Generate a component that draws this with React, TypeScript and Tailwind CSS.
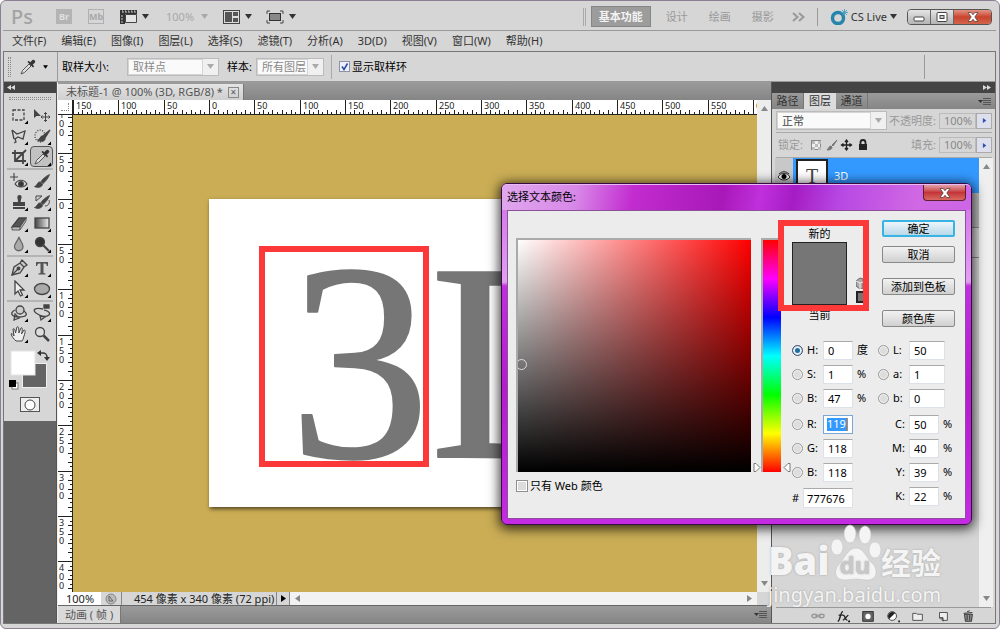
import type { ReactNode } from 'react';
import clsx from 'clsx';

const MENUS = ['文件(F)', '编辑(E)', '图像(I)', '图层(L)', '选择(S)', '滤镜(T)', '分析(A)', '3D(D)', '视图(V)', '窗口(W)', '帮助(H)'];

// pixels on the ruler for 50 document units
const UNIT = 45.33;

function Caret({ className = 'text-[#333]' }: { className?: string }) {
  return (
    <svg viewBox="0 0 7 5" className={clsx('h-[5px] w-[7px] shrink-0', className)}>
      <path d="M0 0h7L3.5 5z" fill="currentColor" />
    </svg>
  );
}

function WindowButtons() {
  return (
    <div className="flex h-4 overflow-hidden rounded border border-[#555]">
      <button aria-label="最小化" className="flex w-[23px] items-center justify-center border-r border-[#666] bg-linear-to-b from-[#e4e4e4] to-[#b4b4b4]">
        <svg viewBox="0 0 12 10" className="h-[10px] w-3"><rect x="1" y="5" width="10" height="4" rx="1" fill="#fff" stroke="#444" /></svg>
      </button>
      <button aria-label="还原" className="flex w-[23px] items-center justify-center border-r border-[#666] bg-linear-to-b from-[#e4e4e4] to-[#b4b4b4]">
        <svg viewBox="0 0 12 10" className="h-[10px] w-3"><rect x="1" y=".5" width="10" height="9" rx="1" fill="#fff" stroke="#444" /><rect x="4" y="3.5" width="4" height="3" fill="#ccc" stroke="#444" /></svg>
      </button>
      <button aria-label="关闭" className="flex w-[37px] items-center justify-center bg-linear-to-b from-[#e39384] via-[#c8432c] to-[#d4644c]">
        <CloseGlyph />
      </button>
    </div>
  );
}

function CloseGlyph() {
  return (
    <svg viewBox="0 0 12 10" className="h-[10px] w-3">
      <path d="M1 .5h3.2L6 2.7 7.800.5H11L7.800 5 11 9.500H7.800L6 7.300 4.200 9.500H1L4.200 5z" fill="#fff" stroke="#5a4040" strokeWidth=".8" />
    </svg>
  );
}

function AppBar() {
  return (
    <header className="flex h-7 items-center border-b border-[#999] pr-1 pl-2">
      <span className="w-[45px] text-xl leading-5 font-medium text-[#a3a3a3]">Ps</span>
      <button className="mr-4 h-[15px] w-4 bg-[#b4b4b4] text-[9px] leading-[15px] font-bold text-[#e0e0e0]">Br</button>
      <button className="mr-4 h-[15px] w-4 border border-[#b0b0b0] text-[9px] leading-[13px] font-bold text-[#a8a8a8]">Mb</button>
      <button aria-label="查看额外内容" className="flex items-center gap-[5px]">
        <svg viewBox="0 0 17 15" className="h-[15px] w-[17px]">
          <path d="M0 1h17v4H5v10H0z" fill="#333" />
          <path d="M2 2h1v2M5 2h1v2M8 2h1v2M11 2h1v2M14 2h1v2M1 7h2M1 10h2M1 13h2" stroke="#ccc" fill="none" />
          <path d="M5.500 5.500h11v8h-11z" fill="#e4e4e4" stroke="#444" />
        </svg>
        <Caret />
      </button>
      <button className="ml-[17px] flex items-center gap-[7px] text-[#a8a8a8]">100% <Caret className="text-[#a8a8a8]" /></button>
      <button aria-label="排列文档" className="ml-[15px] flex items-center gap-[5px]">
        <svg viewBox="0 0 17 14" className="h-[14px] w-[17px]">
          <rect x=".5" y=".5" width="16" height="13" fill="#ddd" stroke="#444" />
          <path d="M2 2h7v10H2zM10 2h5v4h-5zM10 8h5v4h-5z" fill="#555" />
        </svg>
        <Caret />
      </button>
      <button aria-label="屏幕模式" className="ml-[14px] flex items-center gap-[5px]">
        <svg viewBox="0 0 18 14" className="h-[14px] w-[18px]">
          <rect x="3.500" y="3.500" width="11" height="7" fill="#888" stroke="#333" />
          <path d="M1 4V1h3M14 1h3v3M17 10v3h-3M4 13H1v-3" fill="none" stroke="#444" />
        </svg>
        <Caret />
      </button>

      <div className="ml-auto flex items-center">
        <span className="mr-[5px] h-[18px] w-[3px] border-x border-[#aaa]" />
        <button className="h-[21px] w-[60px] border border-[#858585] bg-[#9c9c9c] font-bold text-[#f4f4f4]">基本功能</button>
        <button className="ml-[15px] text-[#999]">设计</button>
        <button className="ml-[21px] text-[#999]">绘画</button>
        <button className="ml-[21px] text-[#999]">摄影</button>
        <button aria-label="更多" className="ml-[18px]">
          <svg viewBox="0 0 13 10" className="h-[10px] w-[13px]"><path d="M1 1l4.500 4L1 9M7 1l4.500 4L7 9" fill="none" stroke="#999" strokeWidth="2" /></svg>
        </button>
        <span className="mx-3 h-[18px] w-px bg-[#999]" />
        <button className="mr-[10px] flex items-center gap-[3px] text-[#333]">
          <svg viewBox="0 0 18 16" className="h-4 w-[18px]">
            <circle cx="8" cy="9" r="5.500" fill="none" stroke="#2585ab" strokeWidth="3.500" />
            <path d="M14.500 0v7M11 3.500h7M12 1l5 5M17 1l-5 5" stroke="#4b9fc0" strokeWidth=".9" />
          </svg>
          CS Live <Caret />
        </button>
        <WindowButtons />
      </div>
    </header>
  );
}

function Dropdown({ label, value, className, dim }: { label: string; value: string; className: string; dim?: boolean }) {
  return (
    <span className={clsx('flex items-center border border-[#bbb] bg-[#f0f0f0] pr-1', className)}>
      <select aria-label={label} className={clsx('h-full min-w-0 flex-1 appearance-none overflow-hidden border border-[#d4d4d4] bg-[#fafafa] pl-1 leading-3', dim ? 'text-[#888]' : 'text-[#444]')}>
        <option>{value}</option>
      </select>
      <Caret className="ml-1 text-[#aaa]" />
    </span>
  );
}

function OptionsBar() {
  return (
    <div className="flex h-[30px] items-center border-b border-[#999] pl-1 text-black">
      <span className="h-5 w-[3px] border-x border-dotted border-[#888]" />
      <button aria-label="吸管工具" className="ml-2 flex w-[38px] items-center justify-between pr-[9px]">
        <ToolSvg><Eyedropper /></ToolSvg>
        <svg viewBox="0 0 7 5" className="h-1 w-[5px]"><path d="M0 0h7L3.500 5z" /></svg>
      </button>
      <span className="mr-1 h-[29px] w-px bg-[#999]" />
      <span className="w-[65px]">取样大小:</span>
      <Dropdown label="取样大小" value="取样点" dim className="h-[18px] w-[92px]" />
      <span className="ml-2 w-[29px]">样本:</span>
      <Dropdown label="样本" value="所有图层" dim className="h-[18px] w-[68px]" />
      <span className="mx-[7px] h-6 w-px bg-[#aaa]" />
      <label className="flex items-center gap-[2px]">
        <input type="checkbox" defaultChecked className="peer sr-only" />
        <svg viewBox="0 0 11 11" className="h-[11px] w-[11px]">
          <rect x=".5" y=".5" width="10" height="10" fill="#eef" stroke="#8a94a4" />
          <path d="M3 5.500l2 3L8.500 2.500" fill="none" stroke="#2b4a9c" strokeWidth="1.500" />
        </svg>
        显示取样环
      </label>
      <span className="mr-[70px] ml-auto h-6 w-px bg-[#999]" />
    </div>
  );
}

function ToolSvg({ children }: { children: ReactNode }) {
  return (
    <svg viewBox="0 0 18 18" className="h-[18px] w-[18px] shrink-0" fill="none" stroke="#444" strokeWidth="1.300">
      {children}
    </svg>
  );
}

function Eyedropper() {
  return (
    <>
      <path d="M2 16l1.500-3.500L10 6l2 2-6.500 6.500z" fill="#ddd" stroke="#555" strokeWidth="1" />
      <path d="M8.500 4l5.500 5.500 1.200-1.200-1.500-1.500L16 4.500C17 3 15 1 13.500 2L11.200 4.300 9.700 2.800z" fill="#333" stroke="none" />
    </>
  );
}

const brush = <path d="M16.500 2.500C13 4 9.500 7 8 9.500L10 11.500C12.500 9.500 15.500 6 16.500 2.500zM7.500 10C4 9.500 5 13 1.500 14.500 5 16.500 9.500 15 9.500 12z" fill="#444" stroke="#444" strokeWidth=".8" />;

const TOOLS: { name: string; art: ReactNode; flyout?: boolean; active?: boolean }[][] = [
  [
    { name: '矩形选框', flyout: true, art: <rect x="3" y="4" width="11" height="10" strokeDasharray="3 1.500" /> },
    { name: '移动', art: <><path d="M1 3v9l2.500-2H8z" fill="#444" stroke="none" /><path d="M12.500 6.500v9M8 11h9M11 8l1.500-1.500L14 8M11 14l1.500 1.500L14 14M9.500 9.500L8 11l1.500 1.500M15.500 9.500L17 11l-1.500 1.500" strokeWidth="1" /></> },
    { name: '多边形套索', flyout: true, art: <path d="M2 3l5 4 8-3-2 8-5-2-3 2 1 3-2 1M2 3l2 9" /> },
    { name: '快速选择', flyout: true, art: <><ellipse cx="7" cy="9" rx="5" ry="6" strokeDasharray="1 1.500" /><path d="M17 3l-6 5 1.500 2zM10 9c-3 0-2 3-5 4 3 2 7 1 7-2z" fill="#444" /></> },
    { name: '裁剪', flyout: true, art: <path d="M5 2v11h11M2 5h11v11M5 13L16 2" strokeWidth="1.800" /> },
    { name: '吸管', flyout: true, active: true, art: <Eyedropper /> },
  ],
  [
    { name: '修复', flyout: true, art: <><path d="M4 1v8M0 5h8M5 12c3-5 9-5 12 0-3 4-9 4-12 0z" strokeWidth="1.100" /><circle cx="11" cy="12" r="2.300" fill="#333" /></> },
    { name: '画笔', flyout: true, art: brush },
    { name: '图章', flyout: true, art: <path d="M7.500 3a2.500 2.500 0 0 1 4 0c.5 2-.8 3-.8 6H15v4H3V9h5c0-3-1-4-.5-6zM3 14h12v2H3z" fill="#444" stroke="none" /> },
    { name: '历史画笔', flyout: true, art: <>{brush}<path d="M3 3h6L3 8zM12 13c4 0 5-4 4-6" strokeWidth="1" /></> },
    { name: '橡皮擦', flyout: true, art: <><path d="M2 13l7-9h7l-6 9z" fill="#555" /><path d="M2 13h8v3H2zM10 13l6-9v3l-6 9" fill="#bbb" strokeWidth=".8" /></> },
    {
      name: '渐变',
      flyout: true,
      art: (
        <>
          <defs><linearGradient id="toolGradient"><stop stopColor="#444" /><stop offset="1" stopColor="#eee" /></linearGradient></defs>
          <rect x="2" y="4" width="14" height="10" fill="url(#toolGradient)" />
        </>
      ),
    },
    { name: '模糊', flyout: true, art: <path d="M9 2c1 4 4 6 4 9.500a4.200 4.200 0 0 1-8.500 0C4.500 8 8 6 9 2z" fill="#aaa" stroke="#666" /> },
    { name: '加深', flyout: true, art: <><circle cx="7" cy="7" r="4.500" fill="#333" /><path d="M10 10l6 6" strokeWidth="2.200" /></> },
  ],
  [
    { name: '钢笔', flyout: true, art: <><path d="M2 16l2-8 6-4 4 4-4 6zM10 4l2-3 5 5-3 2" fill="#ccc" /><path d="M2 16l6-6" /><circle cx="8.500" cy="9.500" r="1.300" fill="#444" /></> },
    { name: '文字', flyout: true, art: <path d="M3 3h12v4h-1c-.5-2-1-2.500-3.500-2.500V14l2 .5v1h-7v-1l2-.5V4.500C5 4.500 4.500 5 4 7H3z" fill="#555" stroke="none" /> },
    { name: '路径选择', flyout: true, art: <path d="M5 1v13l3-3 2.500 5 2-1L10 10h4z" fill="#eee" /> },
    { name: '椭圆', flyout: true, art: <ellipse cx="9" cy="9" rx="7.500" ry="5.500" fill="#aaa" /> },
  ],
  [
    { name: '3D 旋转', flyout: true, art: <><circle cx="10" cy="6" r="4" fill="#ccc" /><path d="M5 6C-1 9 2 13 9 13c8 0 9-3 5-6M5 10l4 4-5 2z" /></> },
    { name: '3D 环绕', flyout: true, art: <><path d="M10 5C2 3-1 6 3 9c3 2 9 5 13 2 2-3-2-4-5-5M7 12l5 1-4 3z" /><path d="M11 1h5v3h-5z" fill="#444" /></> },
    { name: '抓手', flyout: true, art: <path d="M6 16C4 14 2 12 1 9c1-1 2 0 3 2L3 4c1-1 2 0 2.500 4L7 2c1-1 2 0 1.800 6L11 3c1-1 2 0 .5 6L14 5c1 0 2 .5 0 6-1 3-1 4-2 5z" fill="#eee" strokeWidth="1" /> },
    { name: '缩放', art: <><circle cx="7" cy="7" r="4.500" fill="#ddd" /><path d="M10.500 10.500L16 16" strokeWidth="2.500" /></> },
  ],
];

function Toolbox() {
  return (
    <aside className="flex w-[53px] flex-col border-r border-[#555] bg-[#646464]">
      <div className="flex h-[11px] items-center bg-[#444] pl-[3px]">
        <svg viewBox="0 0 8 5" className="h-[5px] w-2"><path d="M4 0v5L0 2.500zM8 0v5L4 2.500z" fill="#ddd" /></svg>
      </div>
      <div className="bg-[#d6d6d6] px-[3px] pb-[9px]">
        <div className="mx-[2px] mt-1 mb-1 h-[3px] border-y border-dotted border-[#888]" />
        {TOOLS.map((group, i) => (
          <div key={i} className={clsx('grid grid-cols-2', i > 0 && 'mt-px border-t-2 border-[#b4b4b4]')}>
            {group.map((tool) => (
              <button
                key={tool.name}
                aria-label={tool.name}
                className={clsx('flex h-[21px] items-center justify-center border', tool.active ? 'rounded-sm border-[#555] bg-[#c2c2c2]' : 'border-transparent')}
              >
                <ToolSvg>
                  {tool.art}
                  {tool.flyout && <path d="M18 14.500v3.500h-3.500z" fill="#000" stroke="none" />}
                </ToolSvg>
              </button>
            ))}
          </div>
        ))}
        <svg viewBox="0 0 46 44" className="mt-[5px] h-11 w-full">
          <rect x="15.500" y="14.500" width="24" height="24" fill="#646464" stroke="#eee" />
          <rect x="4" y="2" width="24" height="24" fill="#fff" stroke="#e4e4e4" />
          <path d="M33 4h3a4 4 0 0 1 4 4v2" fill="none" stroke="#333" strokeWidth="1.500" />
          <path d="M34 1v6l-4-3zM37 8h6l-3 4z" fill="#333" />
          <rect x="5" y="34" width="6" height="6" fill="#fff" stroke="#777" />
          <rect x="2" y="31" width="7" height="7" fill="#000" />
        </svg>
        <button aria-label="快速蒙版" className="mx-auto mt-1 flex h-[15px] w-5 items-center justify-center border border-[#555] bg-[#eee]">
          <svg viewBox="0 0 12 12" className="h-3 w-3"><circle cx="6" cy="6" r="5" fill="#fff" stroke="#444" /></svg>
        </button>
      </div>
    </aside>
  );
}

function TopRuler() {
  const ticks = Array.from({ length: 152 }, (_, i) => i);
  return (
    <svg className="h-[15px] min-w-0 flex-1 bg-white" fill="#222" shapeRendering="crispEdges">
      {ticks.map((i) => (
        <rect key={i} x={Math.round((i * UNIT) / 10)} y={i % 10 === 0 ? 0 : i % 2 ? 12 : 10} width="1" height="15" />
      ))}
      {ticks.filter((i) => i % 10 === 0).map((i) => (
        <text key={i} x={Math.round((i * UNIT) / 10) + 3} y="9" fontSize="9">{Math.abs(i * 5 - 150)}</text>
      ))}
      <rect y="14" width="100%" height="1" />
    </svg>
  );
}

function SideRuler() {
  const ticks = Array.from({ length: 108 }, (_, i) => i);
  return (
    <svg className="h-full w-[15px] shrink-0 bg-white" fill="#222" shapeRendering="crispEdges">
      {ticks.map((i) => (
        <rect key={i} x={i % 10 === 0 ? 0 : i % 2 ? 12 : 10} y={Math.round((i * UNIT) / 10) - 7} width="15" height="1" />
      ))}
      {ticks.filter((i) => i % 10 === 0).map((i) => (
        <text key={i} fontSize="9">
          {String(Math.abs(i * 5 - 100)).split('').map((digit, n) => (
            <tspan key={n} x="1" y={Math.round((i * UNIT) / 10) + 3 + n * 9}>{digit}</tspan>
          ))}
        </text>
      ))}
      <rect x="14" width="1" height="100%" />
    </svg>
  );
}

function ScrollArrow({ dir }: { dir: 'up' | 'down' | 'left' | 'right' }) {
  const turn = { up: 'rotate-180', down: '', left: 'rotate-90', right: '-rotate-90' }[dir];
  return <Caret className={clsx('text-[#888]', turn)} />;
}

function DocumentWindow() {
  return (
    <main className="flex min-w-0 flex-1 flex-col border-l border-[#eee]">
      <div className="flex h-[18px] items-end bg-linear-to-b from-[#9b9b9b] to-[#858585]">
        <div className="flex h-4 items-center gap-[5px] border-r border-[#777] bg-linear-to-b from-[#e4e4e4] to-[#cfcfcf] pr-1 pl-2 text-[11px] text-[#555]">
          未标题-1 @ 100% (3D, RGB/8) *
          <button aria-label="关闭文档" className="h-[11px] w-[11px] border border-[#888] text-[10px] leading-[9px]">×</button>
        </div>
      </div>
      <div className="flex min-h-0 flex-1">
        <div className="flex min-w-0 flex-1 flex-col">
          <div className="flex">
            <div className="h-[15px] w-[15px] shrink-0 border-r border-b border-[#222] bg-white p-[3px]"><div className="h-full border-r border-b border-dotted border-[#888]" /></div>
            <TopRuler />
          </div>
          <div className="flex min-h-0 flex-1">
            <SideRuler />
            <div className="relative min-w-0 flex-1 overflow-hidden bg-[#caad55]">
              <div className="absolute top-[84px] left-[136px] h-[308px] w-[412px] bg-white shadow-[1px_2px_4px_rgba(0,0,0,0.6)]">
                <svg className="h-full w-full font-['Liberation_Serif',serif]">
                  <text x="80" y="258" fontSize="282" fill="#777676" stroke="#777676" strokeWidth="2" strokeLinejoin="round">3D</text>
                </svg>
              </div>
              <div className="absolute top-[131px] left-[186px] h-[221px] w-[170px] border-6 border-[#fc3838]" />
            </div>
          </div>
        </div>
        <div className="flex w-[14px] flex-col items-center justify-between bg-[#ededed] py-[6px]">
          <ScrollArrow dir="up" />
          <ScrollArrow dir="down" />
        </div>
      </div>
      <div className="flex h-[14px] items-center border-b border-[#666] bg-[#d6d6d6] text-[#222]">
        <input aria-label="缩放" defaultValue="100%" className="h-[13px] w-[43px] bg-white pl-2 outline-none" />
        <svg viewBox="0 0 12 12" className="mx-1 h-3 w-3"><circle cx="6" cy="6" r="5" fill="#bbb" stroke="#888" /><path d="M4 3v5h4M4 3l4 5" stroke="#666" fill="none" /></svg>
        <span className="flex h-full w-[156px] items-center border-x border-[#888] pl-3 whitespace-nowrap">454 像素 x 340 像素 (72 ppi)</span>
        <button aria-label="状态菜单" className="flex h-full w-[13px] items-center justify-center border-r border-[#888]"><Caret className="-rotate-90 text-black" /></button>
        <div className="flex h-full flex-1 items-center justify-between bg-[#f2f2f2] px-1"><ScrollArrow dir="left" /><ScrollArrow dir="right" /></div>
        <div className="h-full w-[14px]" />
      </div>
      <div className="flex h-[17px] items-center justify-between bg-linear-to-b from-[#9b9b9b] to-[#858585] pr-1">
        <button className="h-full border-r border-[#777] bg-[#d9d9d9] px-[7px] text-[#555]">动画 ( 帧 )</button>
        <PanelMenu />
      </div>
    </main>
  );
}

function PanelMenu() {
  return (
    <svg viewBox="0 0 13 9" className="h-[9px] w-[13px]"><path d="M0 3h5L2.500 6z" fill="#333" /><path d="M5 1.500h8M5 3.500h8M5 5.500h8M5 7.500h8" stroke="#555" /></svg>
  );
}

function PercentField({ label }: { label: string }) {
  return (
    <label className="ml-auto flex items-center text-[#999]">
      {label}
      <input defaultValue="100%" className="ml-[3px] h-4 w-[37px] border border-[#bbb] bg-[#d6d6d6] pl-1 text-[#888] outline-none" />
      <span className="flex h-4 w-4 items-center justify-center border border-[#aaa] bg-[#dde0ec]">
        <Caret className="-rotate-90 scale-75 text-[#3350b0]" />
      </span>
    </label>
  );
}

const FOOTER_ICONS: { name: string; art: ReactNode }[] = [
  { name: '链接图层', art: <path d="M1 8a3 2 0 1 0 6 0 3 2 0 1 0-6 0M9 8a3 2 0 1 0 6 0 3 2 0 1 0-6 0M5 8h6" stroke="#999" strokeWidth="1.500" fill="none" /> },
  { name: '图层样式', art: <><path d="M2 14c3 0 2.500-11 6-11M3 7h5M8 7c3 0 2 6 5 6M14 7l-6 6" fill="none" stroke="#222" strokeWidth="1.600" /><path d="M14 13h2v2h-2z" /></> },
  { name: '图层蒙版', art: <><rect x="2" y="3" width="12" height="11" fill="#666" stroke="#222" /><circle cx="8" cy="8.500" r="3" fill="#fff" /></> },
  { name: '调整图层', art: <><circle cx="7" cy="8" r="5" fill="#fff" stroke="#333" /><path d="M3.500 11.500a5 5 0 0 1 7-7zM14 13h2v2h-2z" fill="#222" /></> },
  { name: '新建组', art: <path d="M2 5h4l1 1h6v7H2z" fill="#eee" stroke="#444" /> },
  { name: '新建图层', art: <><path d="M4 4h9v9H7L4 10z" fill="#eee" stroke="#444" /><path d="M4 10h4v4" fill="#999" stroke="#222" /></> },
  { name: '删除图层', art: <><path d="M4 6h9l-1 8H5z" fill="#999" stroke="#222" /><path d="M3 5l10-1M7 3l3-1M7 7v6M10 7v6" stroke="#222" /></> },
];

function LayersPanel() {
  return (
    <aside className="flex w-[224px] flex-col border-l border-[#555] bg-[#d6d6d6]">
      <div className="flex h-[11px] items-center justify-end bg-[#444] pr-1">
        <svg viewBox="0 0 8 5" className="h-[5px] w-2"><path d="M0 0v5l4-2.500zM4 0v5l4-2.500z" fill="#ddd" /></svg>
      </div>
      <div className="flex h-4 items-center bg-linear-to-b from-[#9b9b9b] to-[#858585] pr-1 text-[#333]">
        <button className="h-full w-8 border-r border-[#777]">路径</button>
        <button className="h-full w-8 bg-[#dcdcdc]">图层</button>
        <button className="mr-auto h-full w-8 border-r border-[#777]">通道</button>
        <PanelMenu />
      </div>
      <div className="mr-[3px] ml-1 flex h-6 items-center border-b border-[#aaa]">
        <Dropdown label="混合模式" value="正常" className="h-[19px] w-[111px]" />
        <PercentField label="不透明度:" />
      </div>
      <div className="mr-[3px] ml-1 flex h-[25px] items-center border-b border-[#aaa] text-[#999]">
        <span className="mr-[6px] ml-[2px]">锁定:</span>
        <svg viewBox="0 0 64 16" className="h-4 w-16">
          <rect x="2.500" y="3.500" width="9" height="9" fill="#eee" stroke="#888" /><path d="M3 4h3v3H3zM9 4h3v3H9zM6 7h3v3H6zM3 10h3v3H3zM9 10h3v3H9z" fill="#bbb" />
          <path d="M28 3l-5 5 1 1zM22 9c-2 0-2 2-4 4 4 0 5-1 5-3z" fill="#777" stroke="#777" />
          <path d="M37.500 3v10M32.500 8h10M36 5l1.500-2L39 5M36 11l1.500 2 1.500-2M34.500 6.500L32.500 8l2 1.500M40.500 6.500l2 1.500-2 1.500" fill="none" stroke="#222" strokeWidth="1.300" />
          <path d="M50 7h8v6h-8z" fill="#222" /><path d="M51.500 8V5.500a2.500 2.500 0 0 1 5 0V8" fill="none" stroke="#222" strokeWidth="1.800" />
        </svg>
        <PercentField label="填充:" />
      </div>
      <div className="mr-[2px] ml-[3px] flex min-h-0 flex-1">
        <div className="min-w-0 flex-1">
          <div className="flex h-[35px] items-center bg-[#3399ff] text-white">
            <button aria-label="切换可见性" className="flex h-full w-[18px] items-center justify-center bg-[#c8c8c8]">
              <svg viewBox="0 0 12 12" className="h-3 w-3"><path d="M0 7c3-5 9-5 12 0-3 4-9 4-12 0z" fill="#eee" stroke="#222" /><circle cx="6" cy="6.500" r="2.500" /><path d="M1 4c3-3 7-3 10 0" stroke="#222" fill="none" /></svg>
            </button>
            <span className="ml-[3px] flex h-[33px] w-8 items-center justify-center border-2 border-[#222] bg-white font-['Liberation_Serif',serif] text-xl text-[#444]">T</span>
            <span className="ml-[6px]">3D</span>
          </div>
          <div className="h-[35px] border-b border-[#888] bg-[#bcbcbc]" />
          <div className="h-[30px] border-b border-[#888] bg-[#d6d6d6]" />
        </div>
        <div className="flex w-[14px] flex-col items-center justify-between bg-[#efefef] py-[6px]">
          <ScrollArrow dir="up" />
          <ScrollArrow dir="down" />
        </div>
      </div>
      <div className="mx-1 flex h-4 items-center justify-end gap-[9px] border-t border-[#999] pr-[15px]">
        {FOOTER_ICONS.map((icon) => (
          <button key={icon.name} aria-label={icon.name}>
            <svg viewBox="0 0 16 16" className="h-[14px] w-4">{icon.art}</svg>
          </button>
        ))}
      </div>
    </aside>
  );
}

interface FieldProps {
  label: string;
  value: string;
  unit?: string;
  radio?: boolean;
  checked?: boolean;
  wide?: boolean;
  selected?: boolean;
}

function ColorValue({ label, value, unit, radio, checked, wide, selected }: FieldProps) {
  return (
    <div className="flex h-5 items-center">
      {radio ? (
        <input
          type="radio"
          name="channel"
          aria-label={label}
          defaultChecked={checked}
          className="mr-1 h-[11px] w-[11px] appearance-none rounded-full border border-[#999] bg-[#ddd] shadow-[inset_0_0_0_1px_#f4f4f4] checked:border-[#557] checked:bg-[#1d6fa0] checked:shadow-[inset_0_0_0_2px_#e8f0f6]"
        />
      ) : null}
      <span className={clsx('shrink-0', radio ? 'w-4' : 'w-[31px] pr-1 text-right')}>{label}:</span>
      {selected ? (
        <span className="flex h-[19px] w-[30px] items-center border border-[#7aa7d6] bg-white pl-[3px]">
          <input aria-label={label} defaultValue={value} className="h-[13px] w-[21px] border-r border-[#e08020] bg-[#3399ff] text-white outline-none" />
        </span>
      ) : (
        <input aria-label={label} defaultValue={value} className={clsx('h-[19px] border border-[#dde1ea] border-t-[#aaa] bg-white pl-1 outline-none', wide ? 'w-9' : 'w-[30px]')} />
      )}
      {unit && <span className="ml-1">{unit}</span>}
    </div>
  );
}

function DialogButton({ children, primary }: { children: ReactNode; primary?: boolean }) {
  return (
    <button
      className={clsx(
        'h-[17px] rounded-xs bg-linear-to-b',
        primary ? 'border-2 border-[#38b4e4] from-[#eef6fa] to-[#b8d8e8] leading-[13px]' : 'border border-[#888] from-[#f2f2f2] to-[#d0d0d0] leading-[15px]',
      )}
    >
      {children}
    </button>
  );
}

function ColorPicker() {
  return (
    <section
      role="dialog"
      aria-label="选择文本颜色"
      className="absolute top-[182px] left-[500px] w-[471px] rounded-md border border-[#3a0a44] bg-[linear-gradient(to_bottom,#d070e8_0,#e0a0f0_98px,#c030e0_102px,#b41ccc_60%,#c42ce4)] px-[5px] pb-[5px] text-black shadow-[0_2px_12px_2px_rgba(0,0,0,0.75)]"
    >
      <div className="-mx-[5px] flex h-[26px] items-start justify-between rounded-t-[5px] border-t border-[#eab8f4] bg-[linear-gradient(100deg,#e0a8ee_0,#d888e8_16%,#c22cd0_28%,#a818b8_47%,#c030dc_55%,#a51cc4_62%,#b848e4_72%,#d068e4_88%,#cc66e4)] px-[5px]">
        <h2 className="leading-6">选择文本颜色:</h2>
        <button aria-label="关闭" className="flex h-4 w-[43px] items-center justify-center rounded-b border border-t-0 border-[#5c2030] bg-linear-to-b from-[#e0a0a8] via-[#c43438] to-[#d86860]">
          <CloseGlyph />
        </button>
      </div>
      <div className="flex h-[309px] border border-[#8a5098] bg-[#ececec]">
        <div className="ml-2 pt-[27px]">
          <div className="flex">
            <div className="relative h-[234px] w-[235px] overflow-hidden border-t-2 border-l-2 border-[#aaa] bg-[linear-gradient(to_top,#000,transparent),linear-gradient(to_right,#fff,#f00)]">
              <span className="absolute top-[119px] -left-[2px] h-[11px] w-[11px] rounded-full border border-[#ddd]" />
            </div>
            <div className="ml-[2px] flex items-end">
              <svg viewBox="0 0 8 9" className="h-[9px] w-2"><path d="M1 .5h2l4 4-4 4H1z" fill="#fff" stroke="#777" /></svg>
              <div className="h-[234px] w-5 border-t-2 border-l-2 border-[#aaa] bg-[linear-gradient(to_bottom,#f00,#f0f,#00f,#0ff,#0f0,#ff0,#f00)]" />
              <svg viewBox="0 0 8 9" className="ml-[2px] h-[9px] w-2"><path d="M7 .5H5l-4 4 4 4h2z" fill="#fff" stroke="#777" /></svg>
            </div>
          </div>
          <label className="mt-[6px] flex items-center gap-[2px]">
            <input type="checkbox" className="h-3 w-3 appearance-none border border-[#8e8f8f] bg-[#dcdcdc] shadow-[inset_0_0_0_1px_#fff]" />
            <span>只有 Web 颜色</span>
          </label>
        </div>
        <div className="ml-px pt-[9px]">
          <div className="flex h-[120px]">
            <div className="relative flex w-[90px] flex-col">
              <span className="w-[55px] pt-[6px] text-center leading-4">新的</span>
              <div className="h-[63px] w-[55px] border border-[#222] bg-[#777676]" />
              <span className="w-[55px] pt-[2px] text-center leading-4">当前</span>
              <div className="absolute top-0 -left-[14px] flex h-[91px] w-[91px] flex-col items-end justify-end border-6 border-[#fc3838] pb-[2px]">
                <svg viewBox="0 0 7 12" className="mb-[2px] h-3 w-[7px]"><path d="M0 4l4-3 3 1v10H4L0 9z" fill="#aaa" stroke="#666" /><path d="M0 4l4 2v6M4 6l3-1" stroke="#eee" fill="none" /></svg>
                <span className="h-3 w-[7px] border-2 border-r-0 border-[#222] bg-[#777676]" />
              </div>
            </div>
            <div className="flex w-[73px] flex-col gap-[15px]">
              <div className="flex flex-col gap-[9px]">
                <DialogButton primary>确定</DialogButton>
                <DialogButton>取消</DialogButton>
              </div>
              <DialogButton>添加到色板</DialogButton>
              <DialogButton>颜色库</DialogButton>
            </div>
          </div>
          <div className="flex">
            <div className="flex w-[86px] flex-col gap-[6px]">
              <div className="flex flex-col gap-1">
                <ColorValue label="H" value="0" unit="度" radio checked />
                <ColorValue label="S" value="1" unit="%" radio />
                <ColorValue label="B" value="47" unit="%" radio />
              </div>
              <div className="flex flex-col gap-1">
                <ColorValue label="R" value="119" radio selected />
                <ColorValue label="G" value="118" radio />
                <ColorValue label="B" value="118" radio />
              </div>
              <label className="flex h-5 items-center gap-1">
                #
                <input defaultValue="777676" className="h-5 w-[50px] border border-[#dde1ea] border-t-[#aaa] bg-white pl-[3px] outline-none" />
              </label>
            </div>
            <div className="flex flex-col gap-[6px]">
              <div className="flex flex-col gap-1">
                <ColorValue label="L" value="50" radio wide />
                <ColorValue label="a" value="1" radio wide />
                <ColorValue label="b" value="0" radio wide />
              </div>
              <div className="flex flex-col gap-1">
                <ColorValue label="C" value="50" unit="%" />
                <ColorValue label="M" value="40" unit="%" />
                <ColorValue label="Y" value="39" unit="%" />
                <ColorValue label="K" value="22" unit="%" />
              </div>
            </div>
          </div>
        </div>
      </div>
    </section>
  );
}

function Watermark() {
  return (
    <div className="pointer-events-none absolute top-[522px] left-[767px] font-['Noto_Sans','Noto_Sans_CJK_SC',sans-serif] text-[#f4f4f4] [text-shadow:0_0_2px_rgba(120,120,120,0.6)]">
      <div className="flex h-[58px] items-end">
        <span className="w-[63px] text-[38px] leading-[42px] font-black">Bai</span>
        <div className="relative flex h-14 w-12 items-end justify-center">
          <svg viewBox="0 0 48 56" className="absolute inset-0 h-full w-full overflow-visible" fill="#f4f4f4" stroke="#c4c4c4" strokeWidth=".6">
            <ellipse cx="6" cy="22" rx="6" ry="8" />
            <ellipse cx="19" cy="9" rx="6" ry="9" />
            <ellipse cx="34" cy="10" rx="6" ry="9" />
            <ellipse cx="44" cy="25" rx="6" ry="8" />
            <path d="M25 23c8 0 10 10 17 16 6 7 3 16-5 16-6 0-8-1-12-1s-7 1-12 1c-9 0-11-9-5-16 6-6 9-16 17-16z" />
          </svg>
          <span className="relative text-2xl leading-8 font-bold text-[#c8c8c8]">du</span>
        </div>
        <span className="ml-[2px] text-[30px] leading-9 font-bold">经验</span>
      </div>
      <div className="text-xl leading-7">jingyan.baidu.com</div>
    </div>
  );
}

export default function App() {
  return (
    <div className="relative flex h-screen min-h-[600px] flex-col overflow-hidden rounded-md border border-[#8c7f93] bg-[#d6d6d6] pt-[2px] pr-[3px] pb-1 pl-[2px] font-['Noto_Sans','Noto_Sans_CJK_SC',sans-serif] text-[11px] leading-4 text-[#333]">
      <AppBar />
      <nav className="flex h-5 items-center gap-[15px] pl-[9px]">
        {MENUS.map((menu) => (
          <button key={menu} className="whitespace-nowrap">{menu}</button>
        ))}
      </nav>
      <div className="flex min-h-0 flex-1 flex-col border border-[#777]">
        <OptionsBar />
        <div className="flex min-h-0 flex-1">
          <Toolbox />
          <DocumentWindow />
          <LayersPanel />
        </div>
      </div>
      <ColorPicker />
      <Watermark />
    </div>
  );
}
